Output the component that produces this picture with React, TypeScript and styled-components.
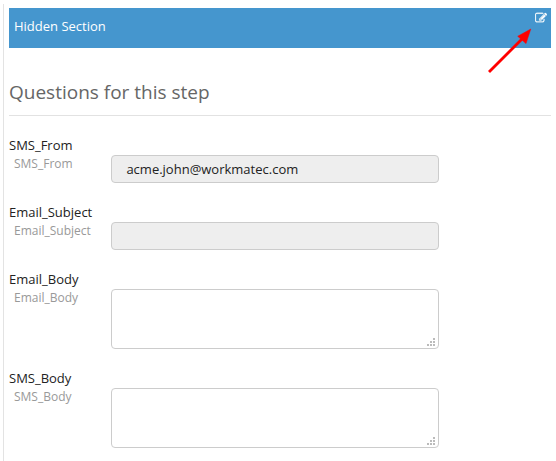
import React from "react";
import styled, { createGlobalStyle } from "styled-components";

const GlobalStyle = createGlobalStyle`
  *, *::before, *::after { box-sizing: border-box; }
  body {
    margin: 0;
    background: #fff;
    font-family: "Open Sans", sans-serif;
    font-size: 13px;
    overflow: hidden;
  }
`;

const Page = styled.main`
  position: relative;
  width: 556px;
  height: 461px;
  padding: 4px 0 0 3px;
  overflow: hidden;
`;

const Panel = styled.section`
  height: 457px;
  padding: 4px 5px 0;
  border-left: 1px solid #e3e3e3;
`;

const SectionHeader = styled.header`
  display: flex;
  justify-content: space-between;
  align-items: flex-start;
  height: 40px;
  padding: 0 4px 0 5px;
  background: #4596ce;
  color: #fff;
`;

const SectionName = styled.span`
  padding-top: 8px;
  line-height: 20px;
`;

const EditButton = styled.button`
  display: block;
  margin: 4px 0 0;
  padding: 0;
  border: 0;
  background: none;
  color: #fff;
  line-height: 0;
`;

const Heading = styled.h1`
  height: 68px;
  margin: 0 0 21px;
  padding-top: 32px;
  border-bottom: 1px solid #e2e2e2;
  color: #666;
  font-size: 19px;
  font-weight: 400;
  line-height: 24px;
`;

const Form = styled.form`
  display: grid;
  row-gap: 21px;
`;

const Row = styled.div`
  display: grid;
  grid-template-columns: 102px 328px;
`;

const Label = styled.label`
  color: #222;
  line-height: 16px;
  white-space: nowrap;
`;

const Hint = styled.span`
  display: block;
  padding: 2px 0 0 5px;
  color: #999;
  font-size: 12px;
  line-height: 17px;
`;

const Input = styled.input`
  width: 100%;
  height: 28px;
  margin: 18px 0 0;
  padding: 0 14.4px;
  border: 1px solid #ccc;
  border-radius: 4px;
  background: #eee;
  color: #222;
  font: inherit;
  outline: none;
`;

const AreaWrap = styled.div`
  position: relative;
  height: 60px;
  margin-top: 18px;
`;

const Area = styled.textarea`
  display: block;
  width: 100%;
  height: 100%;
  padding: 5px 15px;
  border: 1px solid #ccc;
  border-radius: 4px;
  background: #fff;
  color: #222;
  font: inherit;
  resize: none;
  outline: none;
`;

const Grip = styled.svg`
  position: absolute;
  right: 4px;
  bottom: 3px;
  pointer-events: none;
`;

const Arrow = styled.svg`
  position: absolute;
  left: 484px;
  top: 24px;
  pointer-events: none;
`;

const EditIcon = () => (
  <svg width="12" height="12" viewBox="0 0 1792 1792" fill="currentColor" stroke="currentColor" strokeWidth="40" aria-hidden="true">
    <path d="M888 1184l116-116-152-152-116 116v56h96v96h56zm440-720q-16-16-33 1l-350 350q-17 17-1 33t33-1l350-350q17-17 1-33zm80 594v190q0 119-84.5 203.5t-203.5 84.5h-832q-119 0-203.5-84.5t-84.5-203.5v-832q0-119 84.5-203.5t203.5-84.5h832q63 0 117 25 15 7 18 23 3 17-9 29l-49 49q-14 14-32 8-23-6-45-6h-832q-66 0-113 47t-47 113v832q0 66 47 113t113 47h832q66 0 113-47t47-113v-126q0-13 9-22l64-64q15-15 35-7t20 29zm-96-738l288 288-672 672h-288v-288zm444 132l-92 92-288-288 92-92q28-28 68-28t68 28l152 152q28 28 28 68t-28 68z" />
  </svg>
);

const ResizeGrip = () => (
  <Grip width="8" height="8" fill="#bbb" aria-hidden="true">
    <path d="M6 0h2v2H6zM3 3h2v2H3zM6 3h2v2H6zM0 6h2v2H0zM3 6h2v2H3zM6 6h2v2H6z" />
  </Grip>
);

type Field = { name: string; value?: string; multiline?: boolean };

const fields: Field[] = [
  { name: "SMS_From", value: "acme.john@workmatec.com" },
  { name: "Email_Subject" },
  { name: "Email_Body", multiline: true },
  { name: "SMS_Body", multiline: true },
];

const FieldRow = ({ name, value, multiline }: Field) => (
  <Row>
    <Label htmlFor={name}>
      {name}
      <Hint>{name}</Hint>
    </Label>
    {multiline ? (
      <AreaWrap>
        <Area id={name} />
        <ResizeGrip />
      </AreaWrap>
    ) : (
      <Input id={name} defaultValue={value} readOnly />
    )}
  </Row>
);

export default function App() {
  return (
    <>
      <GlobalStyle />
      <Page>
        <Panel>
          <SectionHeader>
            <SectionName>Hidden Section</SectionName>
            <EditButton type="button" aria-label="Edit section">
              <EditIcon />
            </EditButton>
          </SectionHeader>
          <Heading>Questions for this step</Heading>
          <Form>
            {fields.map((field) => (
              <FieldRow key={field.name} {...field} />
            ))}
          </Form>
        </Panel>
        <Arrow width="52" height="52" aria-hidden="true">
          <path d="M5 48L39 14" stroke="#f00" strokeWidth="2.8" strokeLinecap="butt" />
          <path d="M46.8 5L33.7 12.3L42 19.6Z" fill="#f00" stroke="#f00" strokeWidth="0.5" />
        </Arrow>
      </Page>
    </>
  );
}
